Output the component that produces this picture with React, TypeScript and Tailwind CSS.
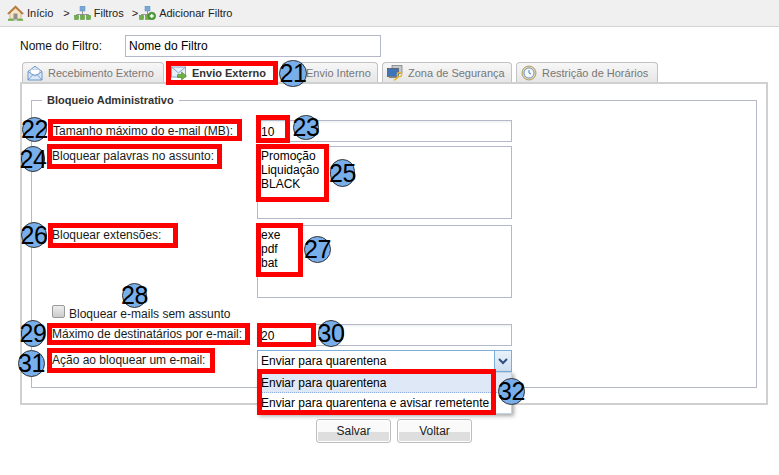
import React from "react";

const inputBase =
  "block w-[255px] border border-[#b5b8c8] bg-gradient-to-b from-[#eef1f1] from-0% to-white to-[15%] pl-[3px] text-black";

function HomeIcon() {
  return (
    <svg width="17" height="16" viewBox="0 0 17 16" className="shrink-0">
      <path d="M3 7v7h11V7L8.5 2z" fill="#f6e6c4" stroke="#b49a70" strokeWidth="0.6" />
      <path d="M0.6 8.4 8.5 0.8l7.9 7.6-1.2.8L8.5 3 1.8 9.2z" fill="#c47f3e" stroke="#8f5f2f" strokeWidth="0.5" />
      <rect x="6.5" y="8.5" width="4" height="5.5" fill="#8f8f8f" />
      <rect x="1" y="13.8" width="6" height="2" fill="#6fae4c" />
      <rect x="10" y="13.8" width="6" height="2" fill="#6fae4c" />
      <rect x="6.5" y="14" width="4" height="1.6" fill="#b9b9b9" />
    </svg>
  );
}

function TreeIcon({ add = false }: { add?: boolean }) {
  return (
    <svg width="17" height="14" viewBox="0 0 17 14" className="shrink-0">
      <rect x="6" y="0" width="5" height="5" fill="#7aa6d8" stroke="#5f8dc4" strokeWidth="0.5" />
      <path d="M8.5 5v3.5M2.5 10V8.5h12V10M8.5 8.5V10" stroke="#8a8a8a" strokeWidth="0.9" fill="none" />
      <rect x="0.5" y="9.5" width="4" height="4" fill="#6fb04a" stroke="#4f8a30" strokeWidth="0.5" />
      <rect x="6.5" y="9.5" width="4" height="4" fill="#6fb04a" stroke="#4f8a30" strokeWidth="0.5" />
      {!add && <rect x="12.5" y="9.5" width="4" height="4" fill="#6fb04a" stroke="#4f8a30" strokeWidth="0.5" />}
      {add && (
        <g>
          <circle cx="12.8" cy="10" r="3.8" fill="#4f9f38" stroke="#37752a" strokeWidth="0.6" />
          <path d="M12.8 8v4M10.8 10h4" stroke="#fff" strokeWidth="1.3" />
        </g>
      )}
    </svg>
  );
}

function MailIcon() {
  return (
    <svg width="16" height="16" viewBox="0 0 16 16" className="shrink-0">
      <path d="M1 6.5 8 1.2l7 5.3V15H1z" fill="#dbe8f7" stroke="#5d8cc4" strokeWidth="0.9" />
      <path d="M3.5 4.5h9v5h-9z" fill="#fff" stroke="#9db7d6" strokeWidth="0.5" />
      <path d="M1 6.5 8 11l7-4.5M1 15l5-5.5M15 15l-5-5.5" fill="none" stroke="#5d8cc4" strokeWidth="0.8" />
    </svg>
  );
}

function SendIcon() {
  return (
    <svg width="16" height="16" viewBox="0 0 16 16" className="shrink-0">
      <rect x="0.5" y="2" width="14" height="10" fill="#e6eef8" stroke="#6a8fbd" strokeWidth="0.8" />
      <path d="M0.5 2 7.5 8 14.5 2" fill="none" stroke="#6a8fbd" strokeWidth="0.8" />
      <path d="M6.5 9.5h4V7l5 4-5 4v-2.5h-4z" fill="#6fb043" stroke="#4c8429" strokeWidth="0.6" />
    </svg>
  );
}

function LanIcon() {
  return (
    <svg width="16" height="16" viewBox="0 0 16 16" className="shrink-0">
      <rect x="5" y="0.5" width="10" height="8" fill="#c5c9cf" stroke="#777" strokeWidth="0.7" />
      <rect x="0.5" y="3.5" width="11" height="8" fill="#3f74b8" stroke="#5a5a5a" strokeWidth="0.8" />
      <rect x="2" y="11.5" width="8" height="1.6" fill="#888" />
      <circle cx="12.5" cy="9.5" r="2.2" fill="none" stroke="#e8b830" strokeWidth="1.3" />
      <path d="M11 11 6 15.5h2.4l4-3.5z" fill="#e8b830" />
    </svg>
  );
}

function ClockIcon() {
  return (
    <svg width="16" height="16" viewBox="0 0 16 16" className="shrink-0">
      <circle cx="8" cy="8" r="7" fill="#e7d8ae" stroke="#a08a55" strokeWidth="0.8" />
      <circle cx="8" cy="8" r="5" fill="#f5f9fd" stroke="#5f8fc6" strokeWidth="0.9" />
      <path d="M8 5v3l2 1" fill="none" stroke="#3c6ea8" strokeWidth="0.9" />
    </svg>
  );
}

function Tab({ icon, label, active = false, className }: { icon: React.ReactNode; label: string; active?: boolean; className: string }) {
  return (
    <div
      className={
        "flex items-center whitespace-nowrap rounded-t-[4px] border border-b-0 border-[#c3c3c3] text-[11px] " +
        (active
          ? "h-[22px] self-start bg-white pb-[2px] font-bold text-[#333] "
          : "h-[20px] bg-gradient-to-b from-[#f7f7f7] to-[#e6e6e6] text-[#777] ") +
        className
      }
    >
      {icon}
      <span className="ml-[5px]">{label}</span>
    </div>
  );
}

function Row({ label, children, className, labelClass = "pl-0 pt-[3px]" }: { label: string; children: React.ReactNode; className: string; labelClass?: string }) {
  return (
    <div className={"flex " + className}>
      <div className={"w-[205px] shrink-0 text-[#1a1a1a] " + labelClass}>{label}</div>
      {children}
    </div>
  );
}

function Circle({ n, className }: { n: number; className: string }) {
  return (
    <div
      className={
        "absolute z-20 flex items-center justify-center whitespace-nowrap rounded-full border border-[#333] bg-[#78aeea] text-[25px] leading-none tracking-[-0.5px] text-black " +
        className
      }
    >
      {n}
    </div>
  );
}

const red = "absolute z-20 border-[5px] border-[#ff0000] pointer-events-none ";

export default function App() {
  return (
    <div className="relative h-[475px] w-[779px] overflow-hidden bg-white font-['Liberation_Sans',Arial,sans-serif] text-[12px] leading-[14px]">
      {/* breadcrumb */}
      <div className="flex h-[27px] items-center border-b border-[#d4d4d4] bg-[#f0f0f0] pl-[7px] text-[11px] text-[#222]">
        <HomeIcon />
        <span className="ml-[3px]">Início</span>
        <span className="ml-[10px]">&gt;</span>
        <span className="ml-[4px]"><TreeIcon /></span>
        <span className="ml-[3px]">Filtros</span>
        <span className="ml-[8px]">&gt;</span>
        <span className="ml-[1px]"><TreeIcon add /></span>
        <span className="ml-[3px]">Adicionar Filtro</span>
      </div>

      <div className="ml-[20px] w-[748px]">
        {/* name */}
        <div className="mt-[8px] flex">
          <div className="w-[105px] pt-[4px] text-[#111]">Nome do Filtro:</div>
          <div className="flex h-[22px] w-[256px] items-center border border-[#b5b8c8] bg-white pl-[3px] text-black">Nome do Filtro</div>
        </div>

        {/* tabs */}
        <div className="relative z-10 mt-[5px] flex h-[20px] items-end pl-[2px]">
          <Tab icon={<MailIcon />} label="Recebimento Externo" className="w-[142px] pl-[4px]" />
          <Tab icon={<SendIcon />} label="Envio Externo" active className="ml-[4px] w-[110px] pl-[2px]" />
          <Tab icon={<span className="w-[18px]" />} label="Envio Interno" className="ml-[4px] w-[96px]" />
          <Tab icon={<LanIcon />} label="Zona de Segurança" className="ml-[4px] w-[130px] pl-[4px]" />
          <Tab icon={<ClockIcon />} label="Restrição de Horários" className="ml-[4px] w-[142px] pl-[4px]" />
        </div>

        {/* panel */}
        <div className="h-[323px] border-2 border-[#d0d0d0] px-[9px] pt-[9px]">
          <fieldset className="h-[295px] border border-[#b5b8c8] pl-[20px]">
            <legend className="-ml-[10px] px-[5px] text-[11px] font-bold text-[#333]">Bloqueio Administrativo</legend>
            <Row label="Tamanho máximo do e-mail (MB):" className="mt-[13px]" labelClass="pl-[1px] pt-[4px]">
              <div className={inputBase + " h-[22px] leading-[22px]"}>10</div>
            </Row>
            <Row label="Bloquear palavras no assunto:" className="mt-[4px]">
              <div className="h-[73px] w-[255px] whitespace-pre-line border border-[#b5b8c8] pl-[3px] pt-[2px] text-black">{"Promoção\nLiquidação\nBLACK"}</div>
            </Row>
            <Row label="Bloquear extensões:" className="mt-[6px]">
              <div className="h-[73px] w-[255px] whitespace-pre-line border border-[#b5b8c8] pl-[3px] pt-[2px] text-black">{"exe\npdf\nbat"}</div>
            </Row>
            <label className="mt-[7px] flex h-[16px] items-start">
              <span className="h-[13px] w-[13px] rounded-[2px] border border-[#9a9a9a] bg-gradient-to-b from-[#eee] to-[#ccc]" />
              <span className="ml-[4px] mt-[2px] text-[#1a1a1a]">Bloquear e-mails sem assunto</span>
            </label>
            <Row label="Máximo de destinatários por e-mail:" className="mt-[3px]">
              <div className={inputBase + " h-[22px] leading-[22px]"}>20</div>
            </Row>
            <Row label="Ação ao bloquear um e-mail:" className="mt-[4px]">
              <div className="relative h-[22px] w-[255px] border border-[#7eadd9] bg-white pl-[3px] leading-[20px] text-black">
                Enviar para quarentena
                <div className="absolute right-0 top-0 flex h-[20px] w-[17px] items-center justify-center border-l border-[#7eadd9] bg-gradient-to-b from-[#e8f1fa] to-[#cfe0f2]">
                  <svg width="10" height="7" viewBox="0 0 10 7"><path d="M1 1l4 4 4-4" fill="none" stroke="#2f4f7f" strokeWidth="2" /></svg>
                </div>
              </div>
            </Row>
          </fieldset>
        </div>

        {/* buttons */}
        <div className="mt-[14px] flex gap-[6px] pl-[296px]">
          {["Salvar", "Voltar"].map((t) => (
            <div key={t} className="flex h-[24px] w-[75px] items-center justify-center rounded-[3px] border border-[#bdbdbd] bg-[linear-gradient(#fafafa_0_55%,#dedede_55%_100%)] text-[#222] shadow-[inset_0_0_0_1px_#fff]">{t}</div>
          ))}
        </div>
      </div>

      {/* select dropdown */}
      <div className="absolute left-[257px] top-[372px] h-[42px] w-[255px] border border-[#c4d4e4] bg-white text-black shadow-[2px_2px_4px_rgba(0,0,0,0.35)]">
        <div className="h-[20px] border-b border-dotted border-[#8fb0e0] bg-[#dfe8f6] pl-[3px] leading-[20px]">Enviar para quarentena</div>
        <div className="h-[20px] pl-[3px] leading-[20px]">Enviar para quarentena e avisar remetente</div>
      </div>

      {/* annotations */}
      <div className={red + "left-[166px] top-[61px] h-[24px] w-[112px]"} />
      <div className={red + "left-[48px] top-[119px] h-[22px] w-[194px]"} />
      <div className={red + "left-[256px] top-[115px] h-[28px] w-[34px]"} />
      <div className={red + "left-[47px] top-[144px] h-[25px] w-[175px]"} />
      <div className={red + "left-[256px] top-[144px] h-[58px] w-[73px]"} />
      <div className={red + "left-[48px] top-[223px] h-[25px] w-[130px]"} />
      <div className={red + "left-[256px] top-[223px] h-[54px] w-[47px]"} />
      <div className={red + "left-[47px] top-[323px] h-[22px] w-[203px]"} />
      <div className={red + "left-[257px] top-[323px] h-[24px] w-[59px]"} />
      <div className={red + "left-[47px] top-[348px] h-[25px] w-[168px]"} />
      <div className={red + "left-[257px] top-[369px] h-[46px] w-[239px]"} />

      <Circle n={21} className="left-[279px] top-[60px] h-[27px] w-[28px]" />
      <Circle n={22} className="left-[22px] top-[117px] h-[25px] w-[25px]" />
      <Circle n={23} className="left-[293px] top-[115px] h-[25px] w-[26px]" />
      <Circle n={24} className="left-[21px] top-[146px] h-[26px] w-[24px]" />
      <Circle n={25} className="left-[330px] top-[159px] h-[28px] w-[25px]" />
      <Circle n={26} className="left-[21px] top-[222px] h-[26px] w-[26px]" />
      <Circle n={27} className="left-[304px] top-[236px] h-[27px] w-[27px]" />
      <Circle n={28} className="left-[122px] top-[283px] h-[25px] w-[25px]" />
      <Circle n={29} className="left-[21px] top-[320px] h-[27px] w-[24px]" />
      <Circle n={30} className="left-[318px] top-[320px] h-[27px] w-[26px]" />
      <Circle n={31} className="left-[18px] top-[350px] h-[27px] w-[27px]" />
      <Circle n={32} className="left-[498px] top-[378px] h-[27px] w-[27px]" />
    </div>
  );
}
